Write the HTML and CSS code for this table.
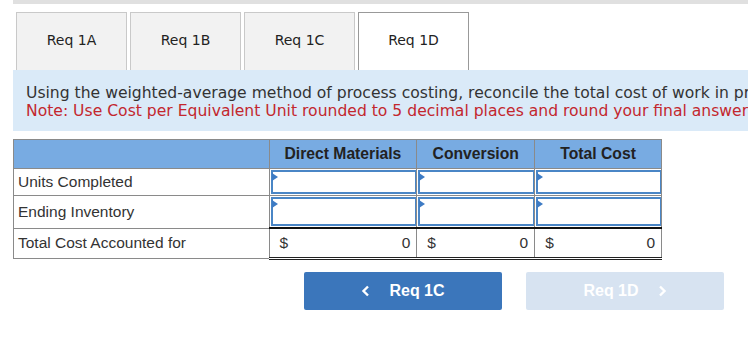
FILE: index.html
```html
<!DOCTYPE html>
<html lang="en">
  <head>
    <meta charset="UTF-8" />
    <meta name="viewport" content="width=device-width, initial-scale=1.0" />
    <title>Req 1D</title>
    <link rel="stylesheet" href="styles.css">
  </head>
  <body>
    <div class="top-bar"></div>

    <div class="wrap">
      <!-- requirement tabs -->
      <div class="tabs">
        <div class="tab">Req 1A</div>
        <div class="tab">Req 1B</div>
        <div class="tab">Req 1C</div>
        <div class="tab active">Req 1D</div>
      </div>

      <div class="instructions">
        <p>Using the weighted-average method of process costing, reconcile the total cost of work in process for the month.</p>
        <p class="note">Note: Use Cost per Equivalent Unit rounded to 5 decimal places and round your final answers to the nearest whole dollar.</p>
      </div>

      <table class="grid">
        <tr class="head">
          <th class="label-col"></th>
          <th class="c1">Direct Materials</th>
          <th class="c2">Conversion</th>
          <th class="c3">Total Cost</th>
        </tr>
        <tr class="row-a">
          <td>Units Completed</td>
          <td class="input-cell"><div class="box"></div></td>
          <td class="input-cell"><div class="box"></div></td>
          <td class="input-cell"><div class="box"></div></td>
        </tr>
        <tr class="row-b">
          <td>Ending Inventory</td>
          <td class="input-cell"><div class="box"></div></td>
          <td class="input-cell"><div class="box"></div></td>
          <td class="input-cell"><div class="box"></div></td>
        </tr>
        <tr class="total">
          <td>Total Cost Accounted for</td>
          <td class="money"><span>$</span><span>0</span></td>
          <td class="money"><span>$</span><span>0</span></td>
          <td class="money"><span>$</span><span>0</span></td>
        </tr>
      </table>

      <div class="nav">
        <button class="btn prev">
          <svg class="chev" width="9" height="12" viewBox="0 0 9 12"><path d="M7 1.5L2.5 6L7 10.5" fill="none" stroke="#fff" stroke-width="2.4"/></svg>
          <span>Req 1C</span>
        </button>
        <button class="btn next" disabled>
          <span>Req 1D</span>
          <svg class="chev" width="9" height="12" viewBox="0 0 9 12"><path d="M2 1.5L6.5 6L2 10.5" fill="none" stroke="#fff" stroke-width="2.4"/></svg>
        </button>
      </div>
    </div>
  </body>
</html>
```

FILE: styles.css
```css
html, body {
  margin: 0;
  padding: 0;
  background: #fff;
  overflow: hidden;
}
body {
  font-family: "Liberation Sans", Arial, sans-serif;
  color: #222;
}
.top-bar {
  margin-left: 13px;
  height: 4px;
  background-color: #e0e0e0;
}
.wrap {
  margin-left: 13px;
  width: 900px;
}

/* tabs */
.tabs {
  display: flex;
  gap: 3px;
  margin-top: 8px;
  padding-left: 3px;
}
.tab {
  box-sizing: border-box;
  width: 111px;
  height: 58px;
  border: 1px solid #c9c9c9;
  border-bottom: none;
  background-color: #f2f2f2;
  font-family: "DejaVu Sans", Verdana, sans-serif;
  font-size: 14px;
  color: #222;
  display: flex;
  align-items: center;
  justify-content: center;
  padding-bottom: 3px;
}
.tab.active {
  background-color: #fff;
  border-color: #999;
}

/* instructions panel */
.instructions {
  background-color: #daeaf8;
  height: 61px;
  padding: 15px 0 0 13px;
  box-sizing: border-box;
  font-family: "DejaVu Sans", Verdana, sans-serif;
  font-size: 15.6px;
  line-height: 17.5px;
  white-space: nowrap;
  color: #333;
}
.instructions p {
  margin: 0;
}
.instructions .note {
  color: #c3272e;
}

/* reconciliation table */
.grid {
  margin-top: 8px;
  border-collapse: collapse;
  width: 649px;
  font-size: 15.5px;
  color: #333;
}
.grid th,
.grid td {
  border: 1px solid #8a8a8a;
  padding: 0;
}
.grid .head th {
  background-color: #78abe2;
  height: 28px;
  font-size: 15.7px;
  color: #222;
}
.label-col { width: 255px; }
.c1 { width: 147px; }
.c2 { width: 117px; }
.c3 { width: 126px; }

.grid td:first-child {
  padding-left: 4px;
}
.row-a td { height: 26px; }
.row-b td { height: 31px; }

.input-cell {
  position: relative;
}
.box {
  position: absolute;
  left: 1px;
  right: 0;
  top: 1px;
  bottom: 1px;
  border: 2px solid #4a86c6;
  border-right-width: 1px;
  background: #fff;
}
.box::before {
  content: "";
  position: absolute;
  left: -1px;
  top: 1px;
  border-left: 6px solid #3d7bc4;
  border-top: 4px solid transparent;
  border-bottom: 4px solid transparent;
}
.row-b .input-cell { border-bottom: 2px solid #111; }

.total td { height: 28px; }
.total .money {
  border-bottom: 3px double #222;
  padding: 0 6px 0 10px;
}
.money {
  white-space: nowrap;
}
.money span:first-child {
  float: left;
}
.money span:last-child {
  float: right;
}

/* previous / next buttons */
.nav {
  display: flex;
  gap: 24px;
  margin-top: 12px;
  padding-left: 291px;
}
.btn {
  width: 198px;
  height: 38px;
  border: none;
  border-radius: 2px;
  font-family: "Liberation Sans", Arial, sans-serif;
  font-weight: bold;
  font-size: 16px;
  color: #fff;
  cursor: pointer;
  display: flex;
  align-items: center;
  justify-content: center;
  gap: 19px;
}
.btn.prev {
  background-color: #3b76bb;
}
.btn.next {
  background-color: #d7e3f1;
  cursor: default;
}
```
